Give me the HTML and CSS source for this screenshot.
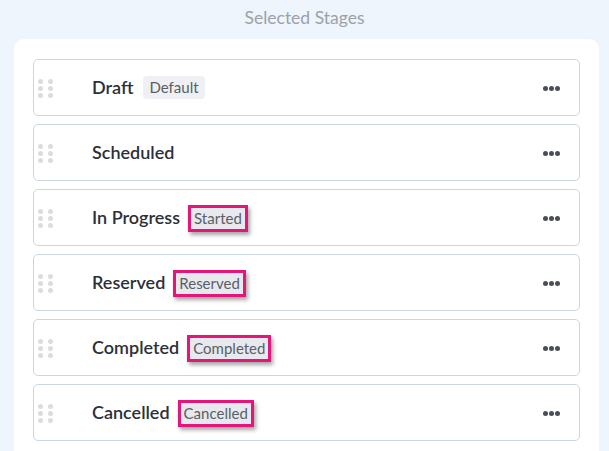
FILE: index.html
```html
<!DOCTYPE html>
<html>
<head>
<meta charset="utf-8">
<link rel="stylesheet" href="styles.css">
</head>
<body>
<div class="page">
  <h1 class="title">Selected Stages</h1>
  <div class="panel">
    <div class="row">
      <div class="handle"><i></i><i></i><i></i><i></i><i></i><i></i></div>
      <span class="name">Draft</span>
      <span class="badge">Default</span>
      <span class="more"><i></i><i></i><i></i></span>
    </div>
    <div class="row">
      <div class="handle"><i></i><i></i><i></i><i></i><i></i><i></i></div>
      <span class="name">Scheduled</span>
      <span class="more"><i></i><i></i><i></i></span>
    </div>
    <div class="row">
      <div class="handle"><i></i><i></i><i></i><i></i><i></i><i></i></div>
      <span class="name">In Progress</span>
      <span class="badge marked">Started</span>
      <span class="more"><i></i><i></i><i></i></span>
    </div>
    <div class="row">
      <div class="handle"><i></i><i></i><i></i><i></i><i></i><i></i></div>
      <span class="name">Reserved</span>
      <span class="badge marked">Reserved</span>
      <span class="more"><i></i><i></i><i></i></span>
    </div>
    <div class="row">
      <div class="handle"><i></i><i></i><i></i><i></i><i></i><i></i></div>
      <span class="name">Completed</span>
      <span class="badge marked">Completed</span>
      <span class="more"><i></i><i></i><i></i></span>
    </div>
    <div class="row">
      <div class="handle"><i></i><i></i><i></i><i></i><i></i><i></i></div>
      <span class="name">Cancelled</span>
      <span class="badge marked">Cancelled</span>
      <span class="more"><i></i><i></i><i></i></span>
    </div>
  </div>
</div>
</body>
</html>
```

FILE: styles.css
```css
html, body {
  margin: 0;
  padding: 0;
  background: #eef5fc;
  font-family: Lato, "Liberation Sans", sans-serif;
}
.page {
  width: 609px;
  height: 451px;
  overflow: hidden;
}
.title {
  margin: 0;
  height: 39px;
  line-height: 36px;
  text-align: center;
  font-size: 17.5px;
  font-weight: 400;
  color: #9da1a8;
}
.panel {
  margin-left: 14px;
  width: 585px;
  background: #fff;
  border-radius: 10px;
  padding: 20px 19px;
  box-sizing: border-box;
  display: flex;
  flex-direction: column;
  gap: 8px;
}
.row {
  height: 57px;
  box-sizing: border-box;
  border: 1px solid #cad6e1;
  border-radius: 5px;
  display: flex;
  align-items: center;
  padding-left: 4px;
  padding-right: 19px;
}
.handle {
  display: grid;
  grid-template-columns: 5px 5px;
  grid-auto-rows: 5px;
  column-gap: 5px;
  row-gap: 2px;
  margin-top: 1px;
}
.handle i {
  display: block;
  width: 5px;
  height: 5px;
  border-radius: 50%;
  background: #dcdcde;
}
.name {
  margin-left: 39px;
  margin-bottom: 2px;
  font-size: 18px;
  font-weight: 600;
  color: #2b303b;
}
.badge {
  margin-left: 10px;
  padding: 0 6px;
  height: 23px;
  line-height: 23px;
  border-radius: 4px;
  background: #eef0f4;
  color: #5a5e66;
  font-size: 15px;
}
.badge.marked {
  margin-left: 8px;
  padding: 0 3px;
  height: 21px;
  line-height: 21px;
  border-radius: 0;
  background: #e7e9ed;
  border: 3px solid #e5167a;
  box-shadow: 2px 3px 4px rgba(0, 0, 0, 0.35);
  margin-top: 2px;
}
.more {
  margin-left: auto;
  display: flex;
  gap: 1px;
  margin-top: 1px;
}
.more i {
  display: block;
  width: 5px;
  height: 5px;
  border-radius: 50%;
  background: #4a4e57;
}
```
